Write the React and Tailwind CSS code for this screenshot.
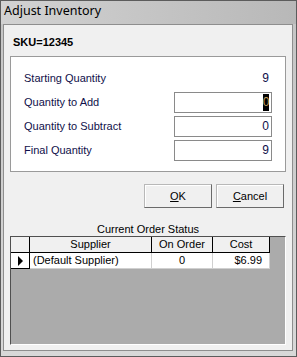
import React from "react";

const F = { fontFamily: '"Liberation Sans", Arial, sans-serif' };

function Row({ label, children }) {
  return (
    <div className="flex items-center h-[24px]">
      <div className="w-[163px] pl-[13px] text-[11px] text-[#10104a]">{label}</div>
      {children}
    </div>
  );
}

function Input({ value, selected }) {
  return (
    <div className="w-[98px] h-[21px] border border-[#8a8a8a] bg-white flex items-center justify-end pr-[2px] text-[12px] text-[#10104a]">
      {selected ? (
        <span className="bg-black text-[#c0a060] h-[17px] w-[6px] flex items-center justify-center leading-none">{value}</span>
      ) : (
        <span>{value}</span>
      )}
    </div>
  );
}

function Button({ children }) {
  return (
    <div className="w-[68px] h-[24px] border border-[#b8b8b8] border-r-[#6a6a6a] border-b-[#6a6a6a] bg-[#f0f0f0] flex items-center justify-center text-[11px] text-black shadow-[inset_1px_1px_0_#ffffff]">
      {children}
    </div>
  );
}

export default function App() {
  return (
    <div
      style={F}
      className="w-[297px] h-[357px] border border-[#5c5c5c] bg-gradient-to-b from-[#c4c4c4] to-[#d8d8d8] flex flex-col"
    >
      <div className="h-[23px] flex items-center pl-[3px] text-[12.5px] text-black bg-gradient-to-r from-[#d2d2d2] to-[#b8b8b8] shrink-0" style={{ fontFamily: '"Noto Sans", "Liberation Sans", sans-serif' }}>
        <span className="mt-[-2px]">Adjust Inventory</span>
      </div>
      <div className="flex-1 ml-[2px] mr-[3px] mb-[5px] border border-[#8e8e8e] bg-[#f0f0f0] px-[6px] flex flex-col">
        <div className="h-[31px] flex items-center pl-[3px] pt-[4px] text-[11px] font-bold text-black">SKU=12345</div>
        <div className="h-[116px] border border-[#9a9a9a] bg-white pt-[9px]">
          <Row label="Starting Quantity">
            <div className="w-[98px] text-right pr-[3px] text-[12px] text-[#10104a]">9</div>
          </Row>
          <Row label="Quantity to Add">
            <Input value="0" selected />
          </Row>
          <Row label="Quantity to Subtract">
            <Input value="0" />
          </Row>
          <Row label="Final Quantity">
            <Input value="9" />
          </Row>
        </div>
        <div className="flex justify-end gap-[4px] mt-[12px] pr-[2px]">
          <Button>
            <span><span className="underline">O</span>K</span>
          </Button>
          <Button>
            <span><span className="underline">C</span>ancel</span>
          </Button>
        </div>
        <div className="text-center text-[11px] text-black mt-[14px] h-[14px] leading-[14px]">Current Order Status</div>
        <div className="mt-[0px] h-[109px] border border-[#505050] border-r-[#ffffff] border-b-[#ffffff] bg-[#ababab] text-[11px]">
          <div className="flex h-[16px] bg-[#f0f0f0] w-[259px] border-b border-black">
            <div className="w-[19px] border-r border-black"></div>
            <div className="w-[122px] border-r border-black flex items-center justify-center">Supplier</div>
            <div className="w-[61px] border-r border-black flex items-center justify-center">On Order</div>
            <div className="w-[57px] border-r border-black flex items-center justify-center">Cost</div>
          </div>
          <div className="flex h-[16px] bg-white w-[259px]">
            <div className="w-[19px] border-r border-b border-black flex items-center justify-center">
              <svg width="7" height="10" viewBox="0 0 7 10"><path d="M1 0 L6 5 L1 10 Z" fill="#000" /></svg>
            </div>
            <div className="w-[122px] border-r border-b border-[#d0d0d0] flex items-center pl-[3px]">(Default Supplier)</div>
            <div className="w-[61px] border-r border-b border-[#d0d0d0] flex items-center justify-center">0</div>
            <div className="w-[57px] border-r border-b border-[#d0d0d0] flex items-center justify-end pr-[7px]">$6.99</div>
          </div>
        </div>
      </div>
    </div>
  );
}
